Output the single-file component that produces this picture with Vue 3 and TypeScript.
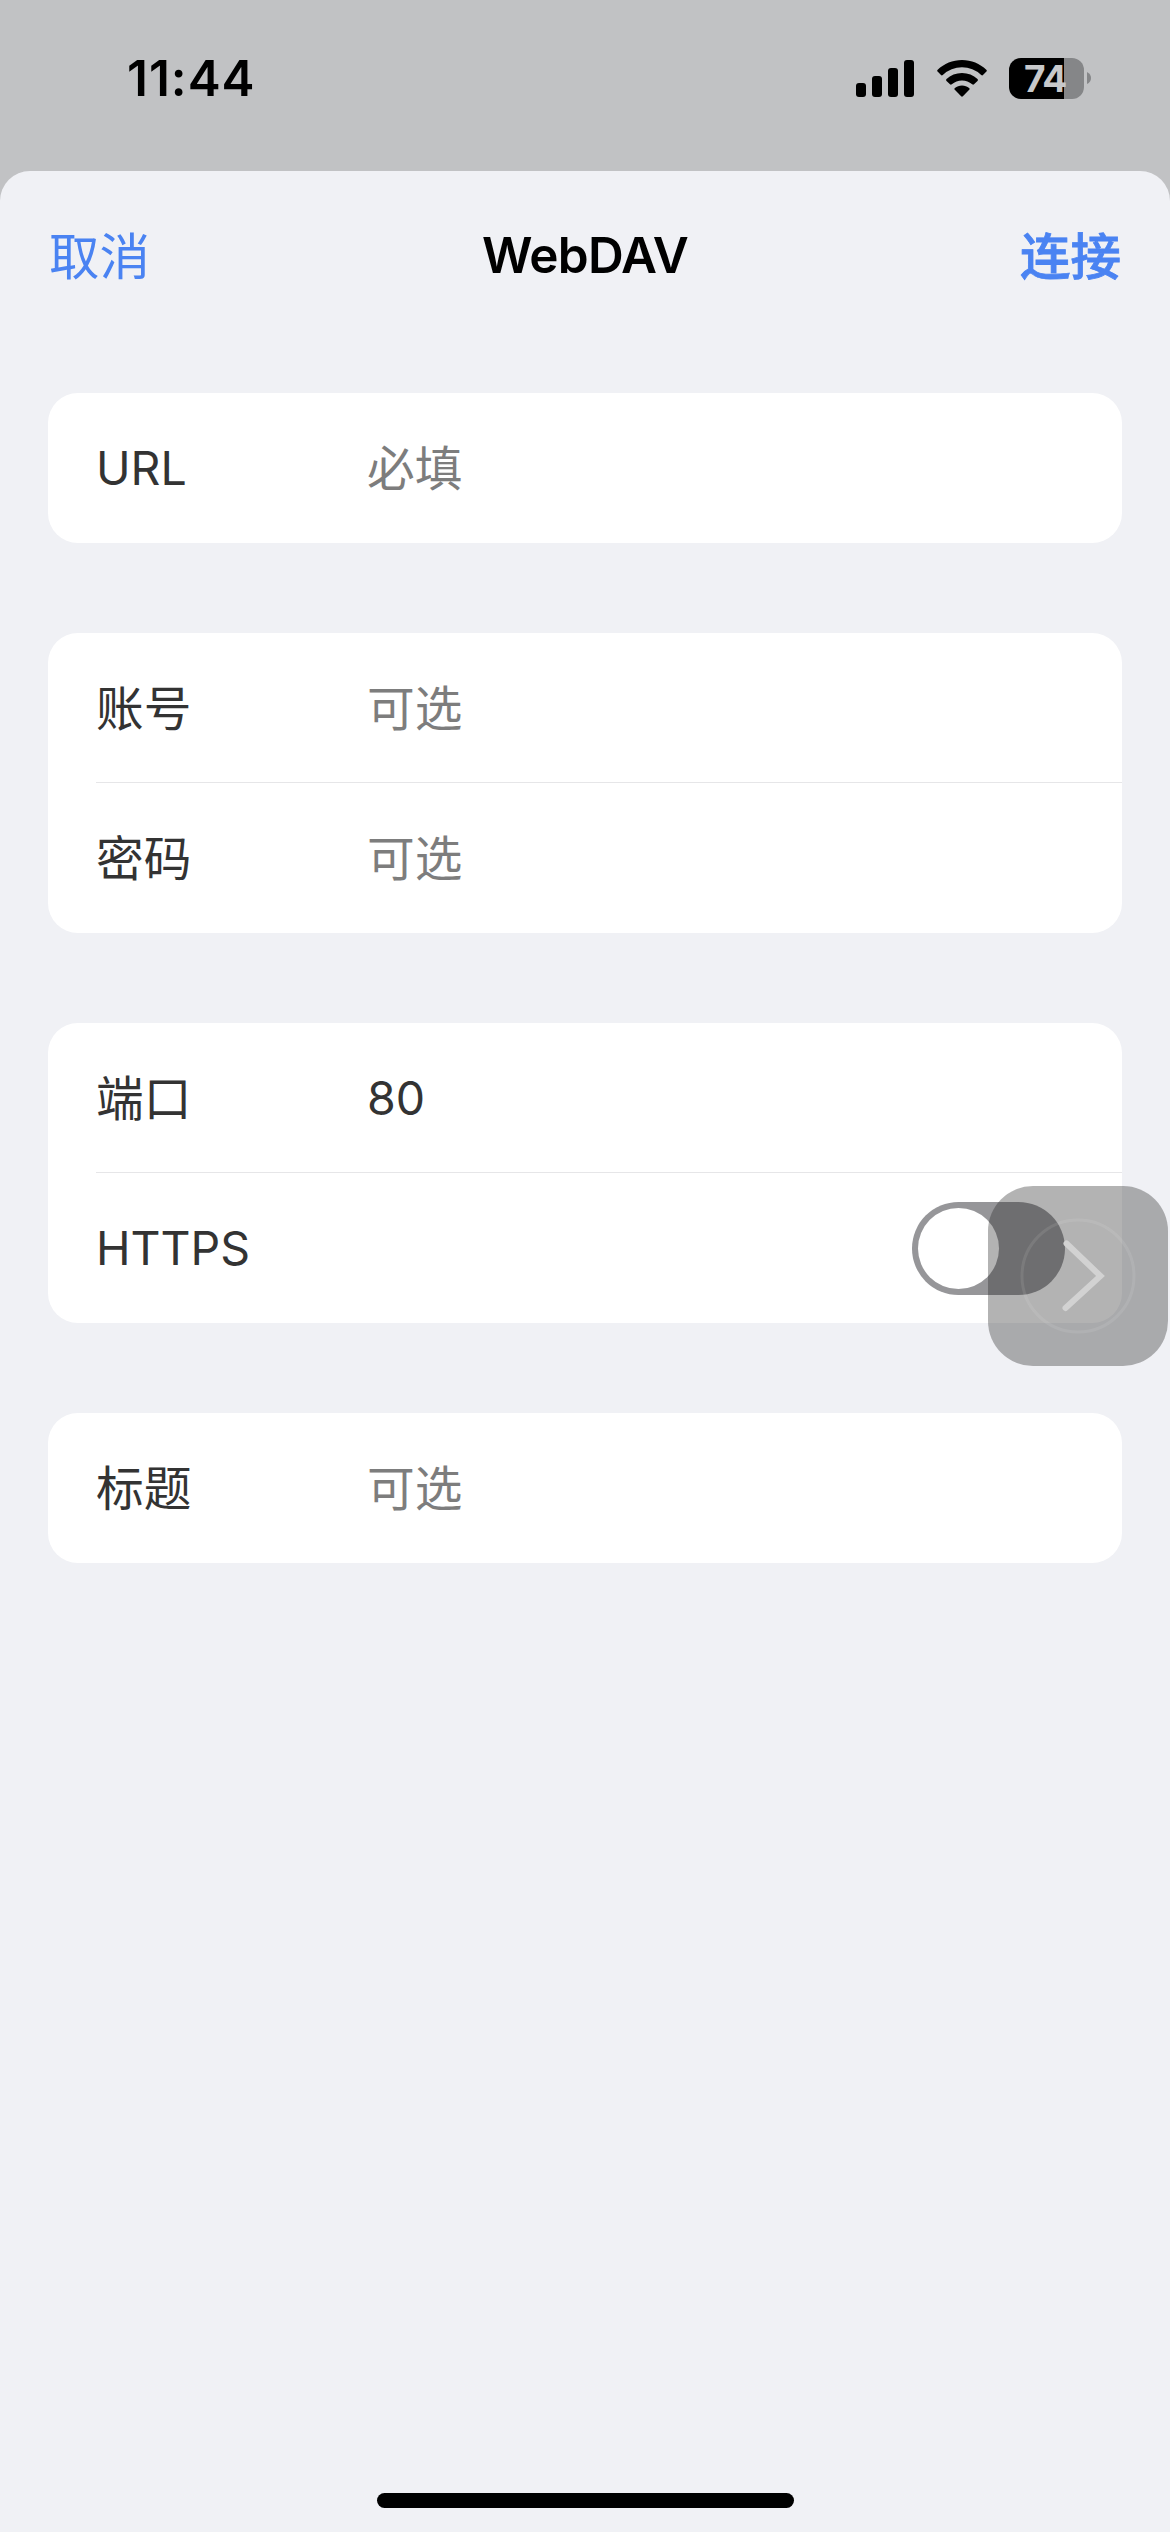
<script setup lang="ts">
import { ref } from 'vue'

interface Field {
  label: string
  value?: string
  placeholder?: string
  toggle?: boolean
}

const battery = 74
const https = ref(false)

const groups: Field[][] = [
  [{ label: 'URL', placeholder: '必填' }],
  [
    { label: '账号', placeholder: '可选' },
    { label: '密码', placeholder: '可选' },
  ],
  [
    { label: '端口', value: '80' },
    { label: 'HTTPS', toggle: true },
  ],
  [{ label: '标题', placeholder: '可选' }],
]

const isLatin = (text: string) => /^[\x20-\x7e]+$/.test(text)
</script>

<template>
  <div class="screen">
    <header class="status">
      <span class="time">11:44</span>
      <div class="indicators">
        <svg class="signal" width="58" height="37" viewBox="0 0 58 37">
          <rect x="0" y="23" width="10" height="14" rx="3" />
          <rect x="16" y="16" width="10" height="21" rx="3" />
          <rect x="32" y="8" width="10" height="29" rx="3" />
          <rect x="48" y="0" width="10" height="37" rx="3" />
        </svg>
        <svg class="wifi" width="50" height="37" viewBox="0 0 50 37">
          <path d="M25 0C34.400 0 42.900 3.700 49.300 9.700Q50.300 10.600 49.400 11.600L46 15Q45.200 15.800 44.200 14.900A28.200 28.200 0 0 0 5.800 14.900Q4.800 15.800 4 15L.6 11.600Q-.3 10.600.7 9.700C7.100 3.700 15.600 0 25 0Z" />
          <path d="M25 13C31 13 36.400 15.200 40.500 19Q41.500 20 40.500 21L37 24.300Q36.200 25.100 35.200 24.300A15.400 15.400 0 0 0 14.800 24.300Q13.800 25.100 13 24.300L9.500 21Q8.500 20 9.500 19C13.600 15.200 19 13 25 13Z" />
          <path d="M25 25.500C27.700 25.500 30.200 26.400 32.100 27.900Q33.100 28.800 32.200 29.800L25.900 36.300Q25 37.200 24.100 36.300L17.800 29.800Q16.900 28.800 17.900 27.900C19.800 26.400 22.300 25.500 25 25.500Z" />
        </svg>
        <div class="battery">
          <div class="cell" :style="{ '--charge': battery + '%' }">{{ battery }}</div>
          <svg width="4" height="12" viewBox="0 0 4 12"><path d="M0 0Q4 2 4 6T0 12Z" fill="#858688" /></svg>
        </div>
      </div>
    </header>

    <main class="sheet">
      <nav class="nav">
        <span class="action">取消</span>
        <span class="title">WebDAV</span>
        <span class="action strong">连接</span>
      </nav>
      <form class="groups">
        <section v-for="(group, i) in groups" :key="i" class="card">
          <div v-for="field in group" :key="field.label" class="row">
            <span class="label" :class="{ latin: isLatin(field.label) }">{{ field.label }}</span>
            <button
              v-if="field.toggle"
              type="button"
              class="toggle"
              :class="{ on: https }"
              @click="https = !https"
            ></button>
            <span v-else-if="field.value" class="value latin">{{ field.value }}</span>
            <span v-else class="value placeholder">{{ field.placeholder }}</span>
          </div>
        </section>
      </form>
      <div class="home"></div>
    </main>

    <div class="floating">
      <svg width="180" height="180" viewBox="0 0 180 180" fill="none">
        <circle cx="90" cy="90" r="56" stroke="#fff" stroke-opacity=".09" stroke-width="3" />
        <path d="M78.500 57.500L112.500 90L77.500 122" stroke="#d2d2d2" stroke-width="6" stroke-linecap="round" />
      </svg>
    </div>
  </div>
</template>

<style>
body {
  margin: 0;
}
</style>

<style scoped>
.screen {
  position: relative;
  display: flex;
  flex-direction: column;
  width: 1170px;
  height: 2532px;
  overflow: hidden;
  background: #c1c2c4;
  font-family: Inter, 'Noto Sans CJK SC', sans-serif;
  color: #000;
}

.status {
  display: flex;
  justify-content: space-between;
  align-items: center;
  box-sizing: border-box;
  height: 171px;
  padding: 0 79px 15px 127px;
}

.time {
  font-size: 49.5px;
  font-weight: 600;
  line-height: 60px;
  letter-spacing: 1px;
}

.indicators {
  display: flex;
  align-items: center;
}

.wifi {
  margin-left: 23px;
}

.battery {
  display: flex;
  align-items: center;
  gap: 3px;
  margin-left: 22px;
}

.cell {
  box-sizing: border-box;
  width: 75px;
  height: 41px;
  padding-left: 15px;
  border-radius: 12px;
  background: linear-gradient(90deg, #000 var(--charge), #858688 var(--charge));
  font-size: 37px;
  font-weight: 700;
  line-height: 41px;
  letter-spacing: -1px;
  color: #c8c9cb;
}

.sheet {
  flex: 1;
  display: flex;
  flex-direction: column;
  border-radius: 30px 30px 0 0;
  background: #f0f1f5;
}

.nav {
  display: flex;
  justify-content: space-between;
  align-items: center;
  height: 168px;
  padding: 0 49px;
}

.title {
  font-size: 49.5px;
  font-weight: 600;
  letter-spacing: -0.7px;
}

.action {
  padding-top: 3px;
  font-size: 50.5px;
  line-height: 74px;
  color: #4a83f2;
}

.strong {
  font-weight: 500;
  -webkit-text-stroke: 0.8px #4a83f2;
}

.groups {
  display: flex;
  flex-direction: column;
  gap: 90px;
  padding: 54px 48px 0;
}

.card {
  border-radius: 30px;
  background: #fff;
}

.row {
  display: flex;
  align-items: center;
  box-sizing: border-box;
  height: 150px;
  margin-left: 48px;
  padding-right: 57px;
  font-size: 47.7px;
  line-height: 72px;
  color: #333;
}

.row:not(:last-child) {
  border-bottom: 1px solid #e6e6e8;
}

.label {
  width: 271px;
}

.label:not(.latin),
.placeholder {
  padding-top: 2px;
}

.latin {
  font-size: 46.5px;
}

.placeholder {
  color: #7d7d7d;
}

.toggle {
  display: flex;
  width: 153px;
  height: 93px;
  margin-left: auto;
  padding: 6px;
  border: 0;
  border-radius: 47px;
  background: #969699;
}

.toggle::before {
  content: '';
  width: 81px;
  height: 81px;
  border-radius: 50%;
  background: #fff;
}

.toggle.on {
  justify-content: flex-end;
  background: #4a83f2;
}

.home {
  width: 417px;
  height: 15px;
  margin: auto auto 24px;
  border-radius: 8px;
  background: #000;
}

.floating {
  position: absolute;
  left: 988px;
  top: 1186px;
  width: 180px;
  height: 180px;
  border-radius: 45px;
  background: rgba(38, 38, 38, 0.35);
}
</style>
